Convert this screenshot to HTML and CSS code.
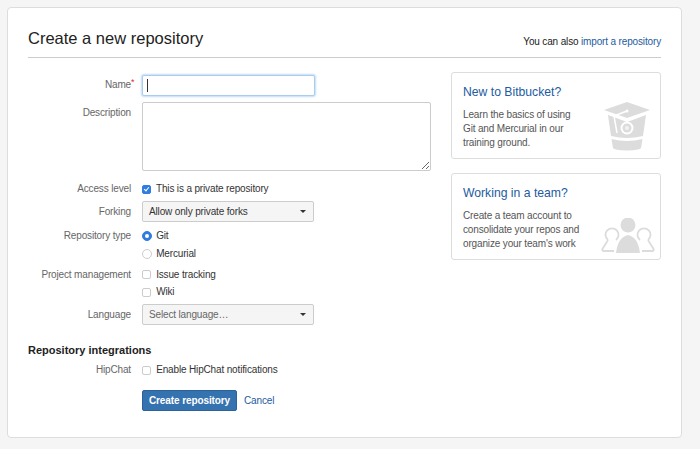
FILE: index.html
```html
<!DOCTYPE html>
<html>

<head>
    <title>Create a new repository</title>
    <link rel="stylesheet" href="styles.css">
</head>

<body>
    <div class="panel">
        <div class="page-header">
            <h1>Create a new repository</h1>
            <p>You can also <a href="#">import a repository</a></p>
        </div>

        <div class="columns">
            <form class="repo-form">
                <div class="row row-name">
                    <label>Name<span class="required">*</span></label>
                    <div class="input-wrap">
                        <input type="text" class="text-input focused">
                        <span class="caret"></span>
                    </div>
                </div>
                <div class="row row-desc">
                    <label>Description</label>
                    <textarea class="text-area"></textarea>
                </div>
                <div class="row row-access">
                    <label>Access level</label>
                    <div class="check"><input type="checkbox" class="box" checked> This is a private repository</div>
                </div>
                <div class="row row-fork">
                    <label>Forking</label>
                    <button type="button" class="select">Allow only private forks<span class="arrow"></span></button>
                </div>
                <div class="row row-type">
                    <label>Repository type</label>
                    <div class="stack">
                        <div class="check"><input type="radio" class="box round" name="scm" checked> Git</div>
                        <div class="check"><input type="radio" class="box round" name="scm"> Mercurial</div>
                    </div>
                </div>
                <div class="row row-project">
                    <label>Project management</label>
                    <div class="stack">
                        <div class="check"><input type="checkbox" class="box"> Issue tracking</div>
                        <div class="check"><input type="checkbox" class="box"> Wiki</div>
                    </div>
                </div>
                <div class="row row-lang">
                    <label>Language</label>
                    <button type="button" class="select muted">Select language…<span class="arrow"></span></button>
                </div>

                <h2>Repository integrations</h2>
                <div class="row row-hipchat">
                    <label>HipChat</label>
                    <div class="check"><input type="checkbox" class="box"> Enable HipChat notifications</div>
                </div>
                <div class="row row-actions">
                    <span></span>
                    <div class="actions">
                        <button type="button" class="primary">Create repository</button>
                        <a href="#">Cancel</a>
                    </div>
                </div>
            </form>

            <div class="side">
                <div class="card">
                    <h3>New to Bitbucket?</h3>
                    <p>Learn the basics of using<br>Git and Mercurial in our<br>training ground.</p>
                    <svg class="card-icon icon-bucket" width="46" height="49" viewBox="0 0 46 49">
                        <path d="M4 13 L23 20 L42 13 L39 34 Q23 38 7 34 Z" fill="#dcdcdc" />
                        <path d="M7.5 37 Q23 41 38.5 37 L37 46 Q36 48 23 48.500 Q10 48 9 46 Z" fill="#dcdcdc" />
                        <path d="M23 0 L46 8 L23 16 L0 8 Z" fill="#dcdcdc" />
                        <path d="M23 9 L10 14 L13 31" fill="none" stroke="#fff" stroke-width="1.500" />
                        <circle cx="23" cy="9" r="1.500" fill="#fff" />
                        <circle cx="23" cy="26" r="6.500" fill="#fff" />
                        <circle cx="23" cy="26" r="4.500" fill="#dcdcdc" />
                        <circle cx="23" cy="26" r="2" fill="#f2f2f2" />
                    </svg>
                </div>
                <div class="card">
                    <h3>Working in a team?</h3>
                    <p>Create a team account to<br>consolidate your repos and<br>organize your team's work</p>
                    <svg class="card-icon icon-team" width="54" height="36" viewBox="0 0 54 36">
                        <circle cx="27" cy="7" r="7.500" fill="#dcdcdc" />
                        <path d="M15 35 Q17 19 27 17 Q37 19 39 35 Z" fill="#dcdcdc" />
                        <path d="M7 22 A6.500 6.500 0 1 1 15 22 M7 22 L1.500 31 Q0.500 33 3 33 H13" fill="none" stroke="#dcdcdc" stroke-width="1.800" />
                        <path d="M47 22 A6.500 6.500 0 1 0 39 22 M47 22 L52.500 31 Q53.500 33 51 33 H41" fill="none" stroke="#dcdcdc" stroke-width="1.800" />
                    </svg>
                </div>
            </div>
        </div>
    </div>
</body>

</html>
```

FILE: styles.css
```css
html, body {
    height: 100%;
}

body {
    margin: 0px;
    padding: 7px 18px 11px 7px;
    box-sizing: border-box;
    background-color: #f5f5f5;
    font-family: "Liberation Sans", Arial, sans-serif;
    font-size: 10px;
    letter-spacing: -0.15px;
    color: #333;
}

a {
    color: #235b9e;
    text-decoration: none;
}

.panel {
    box-sizing: border-box;
    height: 431px;
    padding: 18px 20px 0px 20px;
    background-color: white;
    border: 1px solid #ddd;
    border-radius: 4px;
}

.page-header {
    display: flex;
    justify-content: space-between;
    align-items: center;
    box-sizing: border-box;
    height: 32px;
    padding-bottom: 6px;
    border-bottom: 1px solid #ccc;
}

.page-header h1 {
    margin: 0px;
    font-size: 16.5px;
    letter-spacing: 0px;
    font-weight: normal;
    color: #222;
}

.page-header p {
    margin: 0px;
    padding-top: 5px;
    color: #222;
}

.columns {
    display: flex;
    justify-content: space-between;
    padding-top: 14px;
}

.repo-form {
    width: 403px;
    padding-top: 3px;
}

.row {
    display: grid;
    grid-template-columns: 103px 1fr;
    column-gap: 11px;
}

.row label {
    padding-top: 1px;
    margin-bottom: -1px;
    text-align: right;
    color: #666;
    line-height: 14px;
}

.required {
    display: inline-block;
    width: 0px;
    color: #e02b1c;
    font-size: 9px;
    position: relative;
    top: -3px;
}

.input-wrap {
    position: relative;
}

.text-input {
    display: block;
    box-sizing: border-box;
    width: 173px;
    height: 21px;
    margin: 0px;
    border: 1px solid #a9cdf0;
    border-radius: 2px;
    outline: none;
}

.text-input.focused {
    box-shadow: 0 0 2px 1px #c4ddf5;
}

.caret {
    position: absolute;
    left: 5px;
    top: 4px;
    width: 1px;
    height: 13px;
    background-color: #333;
}

.text-area {
    display: block;
    box-sizing: border-box;
    width: 289px;
    height: 69px;
    margin: 0px;
    border: 1px solid #ccc;
    border-radius: 2px;
    outline: none;
}

.check {
    display: flex;
    align-items: center;
    padding-top: 1px;
    margin-bottom: -1px;
    line-height: 14px;
    color: #333;
    white-space: pre;
}

.box {
    appearance: none;
    box-sizing: border-box;
    width: 9px;
    height: 9px;
    margin: 0px 2.500px 0px 0px;
    border: 1px solid #ccc;
    border-radius: 2px;
    background-color: white;
    position: relative;
}

.box.round {
    width: 10px;
    height: 10px;
    margin-right: 1.500px;
    border-radius: 50%;
}

input[type="checkbox"].box:checked {
    background-color: #2f7de1;
    border-color: #2f7de1;
}

input[type="checkbox"].box:checked::after {
    content: "";
    position: absolute;
    left: 2px;
    top: 0px;
    width: 2px;
    height: 4px;
    border: solid white;
    border-width: 0px 1.200px 1.200px 0px;
    transform: rotate(40deg);
}

input[type="radio"].box:checked {
    background-color: #2f7de1;
    border-color: #2f7de1;
}

input[type="radio"].box:checked::after {
    content: "";
    position: absolute;
    left: 2px;
    top: 2px;
    width: 4px;
    height: 4px;
    border-radius: 50%;
    background-color: white;
}

.stack {
    display: flex;
    flex-direction: column;
    gap: 3.500px;
}

.select {
    display: flex;
    justify-content: space-between;
    align-items: center;
    box-sizing: border-box;
    width: 172px;
    height: 21px;
    padding: 0px 7px 0px 6px;
    background-color: #f5f5f5;
    border: 1px solid #ccc;
    border-radius: 2px;
    font: inherit;
    letter-spacing: inherit;
    color: #333;
}

.select.muted {
    color: #666;
}

.arrow {
    width: 0px;
    height: 0px;
    border-left: 3px solid transparent;
    border-right: 3px solid transparent;
    border-top: 3px solid #333;
}

.row-desc {
    margin-top: 6px;
}

.row-desc label {
    padding-top: 4px;
}

.row-name label {
    padding-top: 3px;
}

.row-access {
    margin-top: 10px;
}

.row-fork {
    margin-top: 6px;
}

.row-fork label,
.row-lang label {
    padding-top: 4px;
}

.row-type {
    margin-top: 6px;
}

.row-project {
    margin-top: 7px;
}

.row-lang {
    margin-top: 6px;
}

.repo-form h2 {
    margin: 18px 0px 0px 0px;
    font-size: 11px;
    letter-spacing: 0px;
    line-height: 14px;
    font-weight: bold;
    color: #222;
}

.row-hipchat {
    margin-top: 5px;
}

.row-actions {
    margin-top: 14px;
}

.actions {
    display: flex;
    align-items: center;
    gap: 7px;
}

.primary {
    box-sizing: border-box;
    width: 95px;
    height: 21px;
    padding: 0px;
    background-color: #3572b0;
    border: 1px solid #2d6299;
    border-radius: 2px;
    font: inherit;
    letter-spacing: -0.1px;
    font-weight: bold;
    color: white;
}

.side {
    display: flex;
    flex-direction: column;
    gap: 14px;
}

.card {
    position: relative;
    box-sizing: border-box;
    width: 210px;
    height: 87px;
    padding: 11px 11px 0px 11px;
    border: 1px solid #ddd;
    border-radius: 3px;
}

.card h3 {
    margin: 0px;
    font-size: 12.2px;
    letter-spacing: 0px;
    line-height: 16px;
    font-weight: normal;
    color: #235b9e;
}

.card p {
    margin: 8px 0px 0px 0px;
    line-height: 14px;
    color: #555;
}

.card-icon {
    position: absolute;
}

.icon-bucket {
    left: 152px;
    top: 29px;
}

.icon-team {
    left: 149px;
    top: 44px;
}
```
